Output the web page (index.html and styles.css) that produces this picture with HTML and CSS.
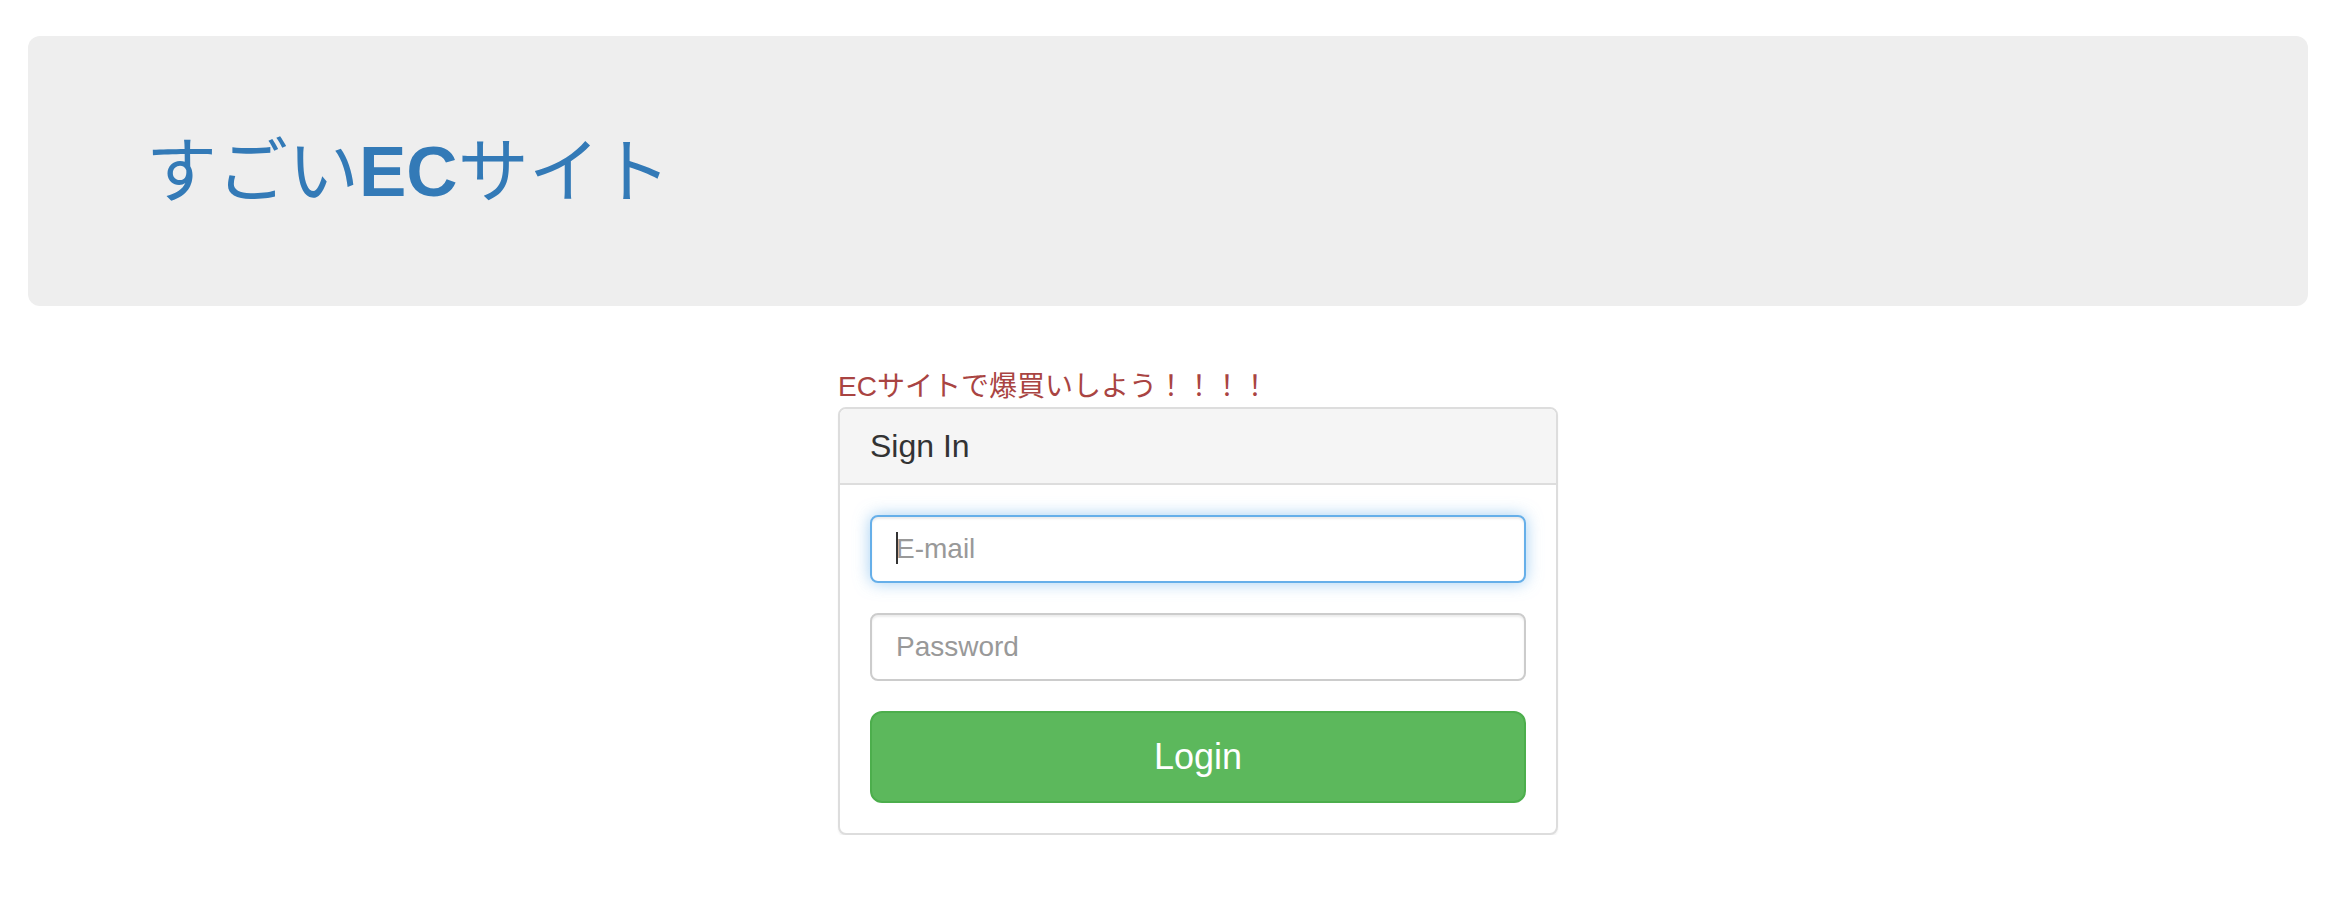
FILE: index.html
```html
<!DOCTYPE html>
<html lang="ja">
<head>
<meta charset="utf-8">
<title>すごいECサイト</title>
<link rel="stylesheet" href="styles.css">
</head>
<body>
  <header class="jumbotron">
    <h1 class="site-title">すごい<b class="title-bold">EC</b>サイト</h1>
  </header>
  <main class="login-area">
    <p class="tagline">ECサイトで爆買いしよう！！！！</p>
    <section class="panel">
      <div class="panel-heading">
        <h3 class="panel-title">Sign In</h3>
      </div>
      <form class="panel-body">
        <div class="form-group field-wrap">
          <input class="form-control is-focused" type="email" placeholder="E-mail">
          <span class="fake-caret"></span>
        </div>
        <div class="form-group">
          <input class="form-control" type="password" placeholder="Password">
        </div>
        <button class="btn-login" type="button">Login</button>
      </form>
    </section>
  </main>
</body>
</html>
```

FILE: styles.css
```css
* {
  box-sizing: border-box;
}

html, body {
  margin: 0;
  padding: 0;
  background: #ffffff;
}

body {
  font-family: "Liberation Sans", "Noto Sans CJK JP", sans-serif;
  color: #333333;
  font-size: 28px;
  line-height: 40px;
}

.jumbotron {
  margin: 36px 34px 0 28px;
  height: 270px;
  background: #eeeeee;
  border-radius: 12px;
  padding: 2px 118px 0 118px;
  display: flex;
  align-items: center;
}

.site-title {
  margin: 0;
  font-size: 71px;
  line-height: 80px;
  font-weight: 400;
  color: #337ab7;
  font-family: "Liberation Sans", "Noto Sans CJK JP", sans-serif;
}

.title-bold {
  font-weight: 700;
}

.login-area {
  margin-left: 838px;
  width: 720px;
  padding-top: 61px;
}

.tagline {
  margin: 0;
  color: #a94442;
  font-size: 28px;
  line-height: 40px;
}

.panel {
  border: 2px solid #dddddd;
  border-radius: 8px;
  background: #ffffff;
  box-shadow: 0 2px 2px rgba(0, 0, 0, 0.05);
  overflow: hidden;
}

.panel-heading {
  background: #f5f5f5;
  border-bottom: 2px solid #dddddd;
  padding: 20px 30px;
}

.panel-title {
  margin: 0;
  font-size: 32px;
  line-height: 34px;
  font-weight: 400;
  color: #333333;
}

.panel-body {
  margin: 0;
  padding: 30px;
  display: flex;
  flex-direction: column;
  gap: 30px;
}

.form-group {
  display: block;
}

.field-wrap {
  position: relative;
}

.form-control {
  display: block;
  width: 100%;
  height: 68px;
  margin: 0;
  padding: 12px 24px;
  font-family: "Liberation Sans", sans-serif;
  font-size: 28px;
  color: #555555;
  background: #ffffff;
  border: 2px solid #cccccc;
  border-radius: 8px;
  box-shadow: inset 0 2px 2px rgba(0, 0, 0, 0.075);
  outline: none;
  caret-color: transparent;
}

.form-control::placeholder {
  color: #999999;
  opacity: 1;
}

.form-control.is-focused {
  border-color: #66afe9;
  box-shadow: inset 0 2px 2px rgba(0, 0, 0, 0.075), 0 0 16px rgba(102, 175, 233, 0.6);
}

.fake-caret {
  position: absolute;
  left: 26px;
  top: 17px;
  width: 2px;
  height: 32px;
  background: #333333;
}

.btn-login {
  display: block;
  width: 100%;
  height: 92px;
  margin: 0;
  padding: 20px 32px;
  font-family: "Liberation Sans", sans-serif;
  font-size: 36px;
  line-height: 48px;
  color: #ffffff;
  background: #5cb85c;
  border: 2px solid #4cae4c;
  border-radius: 12px;
  cursor: pointer;
}
```
